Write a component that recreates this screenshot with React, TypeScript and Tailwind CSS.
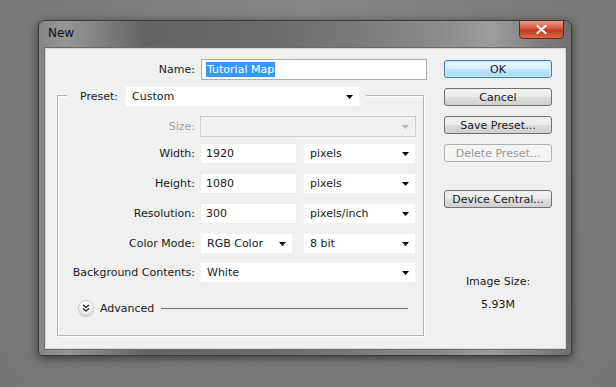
import React from 'react'

const font = { fontFamily: '"DejaVu Sans", Tahoma, sans-serif' }

const Arrow = ({ disabled = false }: { disabled?: boolean }) => (
  <svg width="7" height="4" viewBox="0 0 7 4" className="shrink-0">
    <path d="M0 0h7L3.5 4z" fill={disabled ? '#b5b5b5' : '#000'} />
  </svg>
)

const Select = ({ value, w, disabled = false }: { value?: string; w: string; disabled?: boolean }) => (
  <div
    className={`${w} h-[21px] flex items-center justify-between pl-[6px] pr-[6px] ${
      disabled ? 'bg-[#f0f0f0] border border-[#cdcdcd]' : 'bg-white border border-[#f3f3f3]'
    }`}
  >
    <span className="text-[11px] text-[#1a1a1a] leading-none">{value}</span>
    <Arrow disabled={disabled} />
  </div>
)

const Input = ({ value, w }: { value: string; w: string }) => (
  <div className={`${w} h-[21px] flex items-center pl-[5px] bg-white border border-[#ececec]`}>
    <span className="text-[11px] text-[#1a1a1a] leading-none">{value}</span>
  </div>
)

const Row = ({ label, children, mt, disabled = false }: { label: string; children: React.ReactNode; mt: string; disabled?: boolean }) => (
  <div className={`flex items-center ${mt}`}>
    <div className={`w-[137px] text-right text-[11px] leading-none ${disabled ? 'text-[#a3a3a3]' : 'text-[#1a1a1a]'}`}>{label}</div>
    <div className="ml-[5px] flex items-center gap-[6px]">{children}</div>
  </div>
)

const Button = ({ label, mt, variant = 'normal' }: { label: string; mt: string; variant?: 'normal' | 'default' | 'disabled' }) => {
  const styles = {
    normal: 'border-[#707070] bg-[linear-gradient(#f2f2f2_0%,#ebebeb_50%,#dddddd_51%,#cfcfcf_100%)] text-[#1a1a1a]',
    default: 'border-[#3c7fb1] bg-[linear-gradient(#eaf6fd_0%,#d9f0fc_50%,#bee6fd_51%,#a7d9f5_100%)] text-[#1a1a1a] shadow-[inset_0_0_0_1px_#c8ecfb]',
    disabled: 'border-[#adb2b5] bg-[#f4f4f4] text-[#9a9a9a]',
  }
  return (
    <div className={`${mt} w-[108px] h-[18px] rounded-[3px] border flex items-center justify-center text-[11px] leading-none ${styles[variant]}`}>
      {label}
    </div>
  )
}

const AdvancedIcon = () => (
  <div className="w-[16px] h-[16px] rounded-full border border-[#c9c9c9] bg-[linear-gradient(#ffffff,#e6e6e6)] flex items-center justify-center shadow-[0_1px_1px_rgba(0,0,0,0.15)]">
    <svg width="8" height="8" viewBox="0 0 8 8">
      <path d="M1 1l3 2.5L7 1M1 4.5L4 7l3-2.5" fill="none" stroke="#222" strokeWidth="1.3" />
    </svg>
  </div>
)

export default function App() {
  return (
    <div
      style={font}
      className="w-[616px] h-[387px] overflow-hidden bg-[radial-gradient(ellipse_at_50%_0%,#868686_0%,#7a7a7a_60%,#767676_100%)] pl-[38px] pt-[20px]"
    >
      {/* window frame */}
      <div className="w-[534px] h-[336px] rounded-t-[7px] rounded-b-[4px] border border-[#3b3b3b] bg-[linear-gradient(90deg,#858585_0%,#969696_5%,#646464_20%,#6c6c6c_45%,#8a8a8a_75%,#9c9c9c_85%,#6d6d6d_100%)] shadow-[0_2px_10px_rgba(0,0,0,0.55)] flex flex-col">
        {/* title bar */}
        <div className="h-[27px] flex items-start shrink-0">
          <div className="pl-[9px] pt-[6px] text-[12px] text-[#111] leading-none">New</div>
          <div className="ml-auto mr-[7px] -mt-px w-[45px] h-[19px] rounded-b-[4px] border border-[#5a2a22] bg-[linear-gradient(#e7a08f_0%,#d2563d_45%,#c2371b_55%,#d76a4c_100%)] flex items-center justify-center">
            <svg width="11" height="9" viewBox="0 0 11 9">
              <path d="M1.5 1l8 7M9.5 1l-8 7" stroke="#fff" strokeWidth="2.2" strokeLinecap="round" />
            </svg>
          </div>
        </div>

        {/* client area */}
        <div className="ml-[6px] mr-[5px] h-[301px] border border-[#d9d9d9] bg-[#f0f0f0] flex shadow-[0_0_0_1px_#6a6a6a]">
          {/* left side */}
          <div className="w-[398px] pt-[10px]">
            <div className="flex items-center">
              <div className="w-[149px] text-right text-[11px] leading-none text-[#1a1a1a]">Name:</div>
              <div className="ml-[6px] w-[226px] h-[21px] bg-white border border-[#abadb3] flex items-center pl-[4px]">
                <span className="bg-[#3399ff] text-white text-[11px] leading-[15px] px-[1px]">Tutorial Map</span>
              </div>
            </div>

            {/* preset group */}
            <div className="ml-[11px] mt-[15px] w-[367px] h-[241px] border border-[#b4b4b4] shadow-[inset_1px_1px_0_#fff,1px_1px_0_#fff]">
              <div className="-mt-[10px] ml-[9px] w-fit flex items-center bg-[#f0f0f0] pl-[13px] pr-[6px]">
                <span className="text-[11px] leading-none text-[#1a1a1a]">Preset:</span>
                <div className="ml-[7px]">
                  <Select value="Custom" w="w-[235px]" />
                </div>
              </div>

              <Row label="Size:" mt="mt-[9px]" disabled>
                <Select w="w-[216px]" disabled />
              </Row>
              <Row label="Width:" mt="mt-[6px]">
                <Input value="1920" w="w-[97px]" />
                <Select value="pixels" w="w-[113px]" />
              </Row>
              <Row label="Height:" mt="mt-[9px]">
                <Input value="1080" w="w-[97px]" />
                <Select value="pixels" w="w-[113px]" />
              </Row>
              <Row label="Resolution:" mt="mt-[9px]">
                <Input value="300" w="w-[97px]" />
                <Select value="pixels/inch" w="w-[113px]" />
              </Row>
              <Row label="Color Mode:" mt="mt-[9px]">
                <Select value="RGB Color" w="w-[93px]" />
                <div className="ml-[4px]">
                  <Select value="8 bit" w="w-[113px]" />
                </div>
              </Row>
              <Row label="Background Contents:" mt="mt-[8px]">
                <Select value="White" w="w-[216px]" />
              </Row>

              <div className="mt-[17px] ml-[20px] mr-[15px] flex items-center">
                <AdvancedIcon />
                <span className="ml-[6px] text-[11px] leading-none text-[#1a1a1a]">Advanced</span>
                <div className="ml-[7px] flex-1 h-px bg-[#6b6b6b]" />
              </div>
            </div>
          </div>

          {/* right side */}
          <div className="w-[108px] pt-[11px] flex flex-col items-center">
            <Button label="OK" mt="mt-0" variant="default" />
            <Button label="Cancel" mt="mt-[10px]" />
            <Button label="Save Preset..." mt="mt-[10px]" />
            <Button label="Delete Preset..." mt="mt-[10px]" variant="disabled" />
            <Button label="Device Central..." mt="mt-[28px]" />
            <div className="mt-[67px] text-[11px] leading-[14px] text-[#1a1a1a]">Image Size:</div>
            <div className="mt-[9px] text-[11px] leading-[14px] text-[#1a1a1a]">5.93M</div>
          </div>
        </div>
      </div>
    </div>
  )
}
